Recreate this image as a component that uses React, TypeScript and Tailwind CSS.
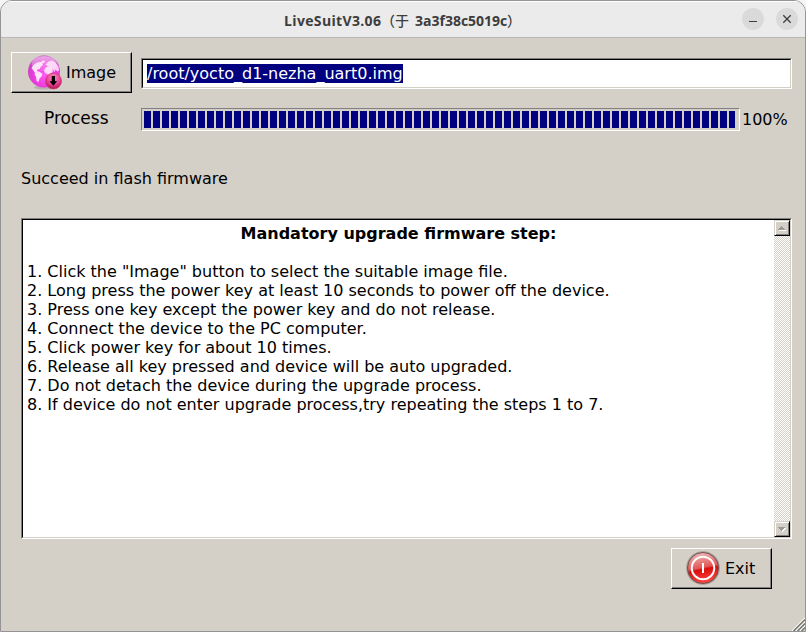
import React from 'react';

const steps = [
  'Click the "Image" button to select the suitable image file.',
  'Long press the power key at least 10 seconds to power off the device.',
  'Press one key except the power key and do not release.',
  'Connect the device to the PC computer.',
  'Click power key for about 10 times.',
  'Release all key pressed and device will be auto upgraded.',
  'Do not detach the device during the upgrade process.',
  'If device do not enter upgrade process,try repeating the steps 1 to 7.',
];

const raised =
  'border border-t-white border-l-white border-r-black border-b-black shadow-[inset_-1px_-1px_0_#808080]';

function GlobeIcon() {
  return (
    <svg width="36" height="36" viewBox="0 0 36 36" className="shrink-0">
      <defs>
        <radialGradient id="globe" cx="0.55" cy="0.6" r="0.6">
          <stop offset="0" stopColor="#ff5cf4" />
          <stop offset="0.65" stopColor="#ec3bdd" />
          <stop offset="1" stopColor="#c645bd" />
        </radialGradient>
        <linearGradient id="gloss" x1="0" y1="0" x2="0" y2="1">
          <stop offset="0" stopColor="#fff" stopOpacity="0.55" />
          <stop offset="1" stopColor="#fff" stopOpacity="0.1" />
        </linearGradient>
        <radialGradient id="badge" cx="0.5" cy="0.3" r="0.7">
          <stop offset="0" stopColor="#fb8fc4" />
          <stop offset="0.6" stopColor="#ea4192" />
          <stop offset="1" stopColor="#a81550" />
        </radialGradient>
      </defs>
      <ellipse cx="18" cy="32.5" rx="11" ry="2" fill="#9b8f96" opacity="0.5" />
      <circle cx="17" cy="16.5" r="16" fill="url(#globe)" />
      <ellipse cx="17" cy="8.5" rx="12.5" ry="7.5" fill="url(#gloss)" />
      <path d="M7 9.5l3-2 4-.5 2-1.500 2 .5-1 2-2 .5 1 1.500-2 1.500-1.500 2.500-2 .5-.5 1.500 3 1 2.500 2-1 2.500-2 2-.5 2.500-1.500 1-1-1.500-.5-4-1.500-2 .5-1.500-2-3-1.500-2z" fill="#ffe9fb" opacity="0.95" />
      <path d="M18.500 9.5l3-3 4-1 3.500 2.500 2.500 3.500.5 4-1.500 1-2-2-1 2.500-1.500-2.500-1.500 0z" fill="#ffe9fb" opacity="0.85" />
      <path d="M18.500 12.5l3-1 3 1.500 1.500 3-1.500 2.500-1.500 3-1.500 1-1-3.500-2.500-1-1-2.500z" fill="#ffe9fb" opacity="0.9" />
      <circle cx="26.500" cy="26" r="8" fill="url(#badge)" stroke="#c8326f" strokeWidth="0.700" />
      <path d="M24.700 21h3.300v5.200h2.200l-3.850 4.500-3.850-4.500h2.200z" fill="#000" />
    </svg>
  );
}

function PowerIcon() {
  return (
    <svg width="34" height="34" viewBox="0 0 34 34" className="-mt-0.5 shrink-0">
      <defs>
        <linearGradient id="red" x1="0.3" y1="0" x2="0.5" y2="1">
          <stop offset="0" stopColor="#ecbcbc" />
          <stop offset="0.5" stopColor="#e45656" />
          <stop offset="0.56" stopColor="#db0c0c" />
          <stop offset="1" stopColor="#ff4a45" />
        </linearGradient>
      </defs>
      <circle cx="17" cy="17" r="16.800" fill="#a09a96" />
      <circle cx="17" cy="17" r="15.500" fill="url(#red)" stroke="#77504f" strokeWidth="1" />
      <circle cx="17" cy="17" r="11.300" fill="none" stroke="#fff" strokeWidth="1.900" />
      <path d="M17 12v10" stroke="#fff" strokeWidth="2" />
    </svg>
  );
}

function ScrollButton({ down }: { down?: boolean }) {
  return (
    <div className="flex size-4 justify-center border border-t-[#d4d0c8] border-l-[#d4d0c8] border-r-black border-b-black bg-[#d4d0c8] pt-[5px] shadow-[inset_1px_1px_0_#fff,inset_-1px_-1px_0_#808080]">
      <svg width="8" height="5" viewBox="0 0 8 5" shapeRendering="crispEdges">
        {down ? (
          <>
            <path d="M1 1h7L4.500 5z" fill="#fff" />
            <path d="M0 0h7v1H6v1H5v1H4v1H3V3H2V2H1V1H0z" fill="#9c9a96" />
          </>
        ) : (
          <>
            <path d="M1 4h7v1H1z" fill="#fff" />
            <path d="M3 0h1v1h1v1h1v1h1v1H0V3h1V2h1V1h1z" fill="#9c9a96" />
          </>
        )}
      </svg>
    </div>
  );
}

export default function App() {
  return (
    <div className="h-[632px] w-[806px] bg-[#f5f5f5]">
      <div className="flex h-full flex-col overflow-hidden rounded-t-xl border border-[#949496] bg-[#d4d0c8] font-['DejaVu_Sans',sans-serif] text-base leading-[19px] text-black">
        <header className="flex h-[37px] shrink-0 items-center border-b border-[#bab9b9] bg-[#ebebeb] shadow-[inset_0_1px_0_#fff]">
          <div className="w-[283px]" />
          <h1 className="flex flex-1 whitespace-pre pt-0.5 font-['Open_Sans','Noto_Sans_CJK_SC',sans-serif] text-sm leading-[19px] font-bold text-[#3d3d3d]">
            <span className="w-[98px] tracking-[0.35px]">LiveSuitV3.06</span>
            <span className="-ml-px w-[34px] font-['Noto_Sans_CJK_SC',sans-serif] font-medium">（于 </span>
            <span className="w-[92px]">3a3f38c5019c</span>
            <span className="font-['Noto_Sans_CJK_SC',sans-serif] font-medium">）</span>
          </h1>
          <div className="mr-[7px] flex gap-3">
            <button className="flex size-[22px] items-center justify-center rounded-full bg-[#dadada]">
              <svg width="10" height="10" viewBox="0 0 10 10"><path d="M1 7.500h8" stroke="#3d3d3d" /></svg>
            </button>
            <button className="flex size-[22px] items-center justify-center rounded-full bg-[#dadada]">
              <svg width="10" height="10" viewBox="0 0 10 10"><path d="M1.300 1.300l7.400 7.400m0-7.400l-7.400 7.400" stroke="#3d3d3d" strokeWidth="1.300" /></svg>
            </button>
          </div>
        </header>
        <main className="flex min-h-0 flex-1 flex-col pl-2.5">
          <div className="mt-3.5 flex h-[41px] items-start">
            <button className={`flex h-[41px] w-[121px] items-center pl-[15px] ${raised}`}>
              <GlobeIcon />
              <span className="ml-[3px]">Image</span>
            </button>
            <div className="mt-1.5 ml-[9px] h-[31px] w-[651px] border border-t-[#808080] border-l-[#808080] border-r-white border-b-white">
              <div className="flex h-full items-center border border-t-black border-l-black border-r-[#d4d0c8] border-b-[#d4d0c8] bg-white pl-1">
                <span className="bg-[#000080] text-white">/root/yocto_d1-nezha_uart0.img</span>
              </div>
            </div>
          </div>
          <div className="mt-[15px] flex h-[23px] items-center">
            <span className="-mt-0.5 w-[130px] pl-[33px] text-[17px]">Process</span>
            <div className="flex h-[23px] w-[599px] gap-0.5 overflow-hidden border border-t-[#808080] border-l-[#808080] border-r-white border-b-white px-0.5 py-0.5">
              {Array.from({ length: 66 }, (_, i) => (
                <div key={i} className="h-[17px] w-[7px] shrink-0 bg-[#000080] last:w-1.5" />
              ))}
            </div>
            <span className="ml-0.5">100%</span>
          </div>
          <p className="mt-[38px] pl-2.5">Succeed in flash firmware</p>
          <section className="mt-[30px] ml-2.5 h-[321px] w-[771px] shrink-0 border border-t-[#808080] border-l-[#808080] border-r-white border-b-white">
            <div className="flex h-full border border-t-black border-l-black border-r-[#d4d0c8] border-b-[#d4d0c8] bg-white">
              <div className="flex-1 pt-1 pl-1">
                <h2 className="pr-1 text-center font-bold">Mandatory upgrade firmware step:</h2>
                <ol className="mt-[19px]">
                  {steps.map((step, i) => (
                    <li key={step}>{i + 1}. {step}</li>
                  ))}
                </ol>
              </div>
              <div className="flex w-4 flex-col justify-between bg-[repeating-conic-gradient(#d4d0c8_0_25%,#fff_0_50%)] bg-[length:2px_2px]">
                <ScrollButton />
                <ScrollButton down />
              </div>
            </div>
          </section>
          <div className="mt-[9px] flex items-end justify-between">
            <button className={`ml-[660px] flex h-[41px] w-[101px] items-center pl-3.5 ${raised}`}>
              <PowerIcon />
              <span className="ml-[5px]">Exit</span>
            </button>
          </div>
          <div className="mt-auto flex justify-end">
            <svg width="13" height="13" viewBox="0 0 13 13">
              <path d="M0 13L13 0M4 13l9-9M8 13l5-5" stroke="#fff" strokeWidth="1.200" />
              <path d="M1.500 13L13 1.500M5.500 13L13 5.500M9.500 13L13 9.500" stroke="#77756f" strokeWidth="1.500" />
            </svg>
          </div>
        </main>
      </div>
    </div>
  );
}
